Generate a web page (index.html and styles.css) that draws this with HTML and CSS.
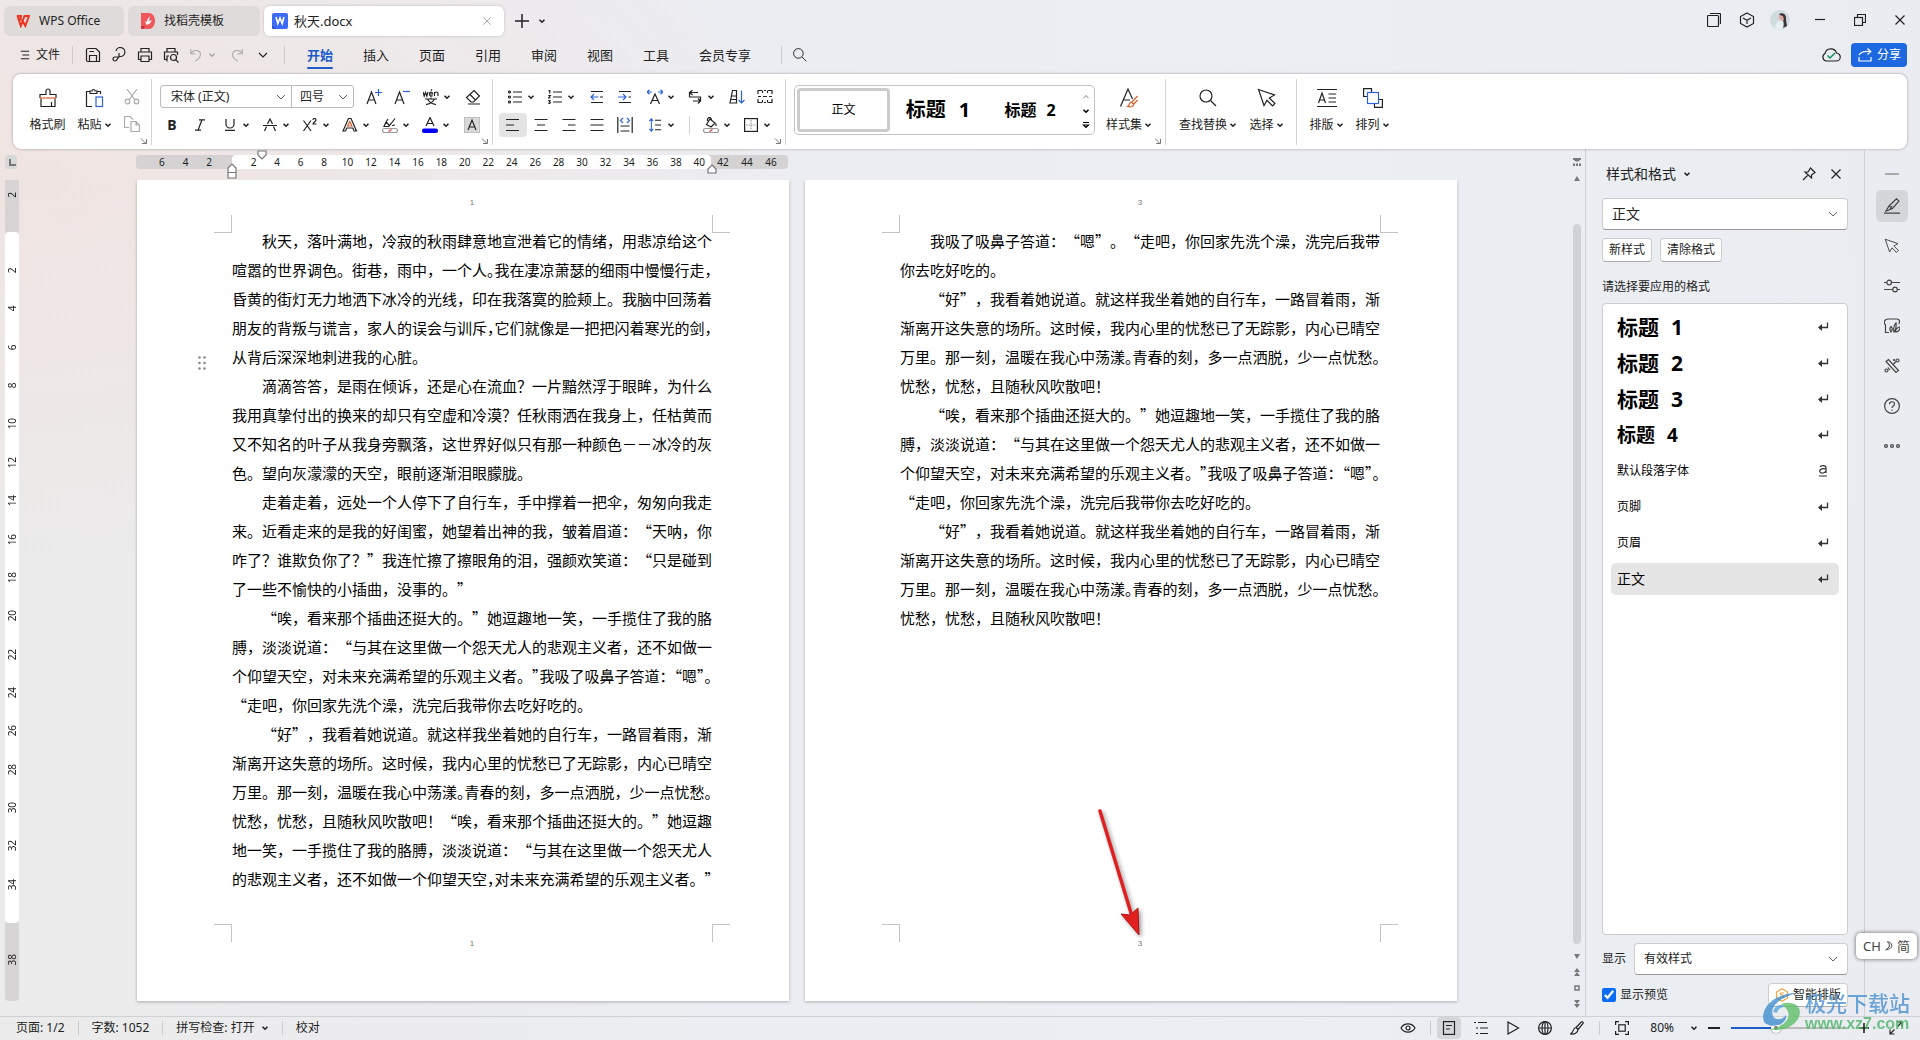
FILE: index.html
```html
<!DOCTYPE html>
<html lang="zh-CN">
<head>
<meta charset="utf-8">
<title>秋天.docx - WPS Office</title>
<link rel="stylesheet" href="styles.css">
</head>
<body>
<svg class="sprite" aria-hidden="true">
  <symbol id="caret" viewBox="0 0 8 8"><path d="M1.500 2.700 4 5.200 6.500 2.700" stroke-width="1.600"/></symbol>
  <symbol id="chev" viewBox="0 0 12 12"><path d="M2 4 6 8 10 4"/></symbol>
  <symbol id="close" viewBox="0 0 12 12"><path d="M1.500 1.500 10.500 10.500M10.500 1.500 1.500 10.500"/></symbol>
  <symbol id="launch" viewBox="0 0 8 8"><path d="M1 1.500 6 6.500M6.500 2V6.500H2"/></symbol>
  <symbol id="ret" viewBox="0 0 12 12"><path d="M10.500 1.500V6.500H3" stroke-width="1.300"/><path d="M5 3V10L1 6.500Z" fill="currentColor" stroke="none"/></symbol>
  <symbol id="mag" viewBox="0 0 20 20"><circle cx="8" cy="8" r="6"/><path d="M12.500 12.500 18 18"/></symbol>
  <symbol id="cursor" viewBox="0 0 20 20"><path d="M1.500 1.500 17.500 7 12.300 10 18 15.500 15.500 18 10 12.300 7 17.500Z"/></symbol>
</svg>
<div class="app">
  <header class="titlebar">
    <nav class="tabs">
      <button class="tab home"><svg class="i14" viewBox="0 0 14 12"><path d="M.8 1H5L4.500 4.500 3 3.300M1.500 1 4.800 11 8.500 1H13L9.300 11 6 4.500" stroke="#f0321e" stroke-width="1.900"/></svg>WPS Office</button>
      <button class="tab tpl"><svg class="i16" viewBox="0 0 16 16"><path d="M1 0H9A6 8 0 0 1 9 16H1Z" fill="#f0575a" stroke="none"/><path d="M1 13H5L3 16H1Z" fill="#c9333a" stroke="none"/><path d="M7 12C4.500 9 5 7 7 9 7 6 9 4 10 3.500 9 6 9.500 7 8.500 9 10 7 11 7 11.500 7.500 11 9 10 11 7 12Z" fill="#fff" stroke="none"/></svg>找稻壳模板</button>
      <button class="tab doc"><svg class="i16" viewBox="0 0 16 16"><rect width="16" height="16" rx="2" fill="#3d6bf5" stroke="none"/><path d="M0 13 4 16H2A2 2 0 0 1 0 14Z" fill="#1c3fb5" stroke="none"/><path d="M4 4 5.800 10.500 8 5 10.200 10.500 12 4" stroke="#fff" stroke-width="1.600"/></svg><span class="grow">秋天.docx</span><svg class="i10 dim"><use href="#close"/></svg></button>
      <button class="plain" aria-label="新建"><svg class="i14" viewBox="0 0 14 14"><path d="M7 0V14M0 7H14" stroke-width="1.500"/></svg></button>
      <button class="plain" aria-label="标签列表"><svg class="i8"><use href="#caret"/></svg></button>
    </nav>
    <div class="winctl">
      <button class="plain" aria-label="窗口"><svg class="i14" viewBox="0 0 14 14"><rect x=".5" y="2.500" width="11" height="11" rx="1"/><path d="M3 .5H12.500A1 1 0 0 1 13.500 1.500V11"/></svg></button>
      <button class="plain" aria-label="应用"><svg class="i16" viewBox="0 0 16 16"><path d="M8 1 14.500 4.500V11.500L8 15 1.500 11.500V4.500ZM4 6 8 8.200 12 6M8 8.200V12"/></svg></button>
      <button class="plain" aria-label="账户"><svg class="i20" viewBox="0 0 20 20"><circle cx="10" cy="10" r="10" fill="#cfdcdf" stroke="none"/><path d="M5 19C5 12 9 10 12 11L14 17 11 20Z" fill="#e7eff1" stroke="none"/><path d="M9 4C13 2 17 5 16 10L17 16 13 18C15 13 13 8 9 4Z" fill="#3c3138" stroke="none"/><path d="M9 5 13 6 14 10 11 11 9 8Z" fill="#dba9a0" stroke="none"/></svg></button>
      <button class="plain" aria-label="最小化"><svg class="i10" viewBox="0 0 10 10"><path d="M0 4.500H10"/></svg></button>
      <button class="plain" aria-label="还原"><svg class="i12" viewBox="0 0 12 12"><rect x=".5" y="3.500" width="8" height="8"/><path d="M3.500 3V.5H11.500V8.500H9"/></svg></button>
      <button class="plain" aria-label="关闭"><svg class="i12"><use href="#close"/></svg></button>
    </div>
  </header>

  <div class="menubar">
    <button class="filebtn"><svg class="i10" viewBox="0 0 10 12"><path d="M0 1.500H10M2 6H10M0 10.500H10"/></svg>文件</button>
    <span class="vsep"></span>
    <div class="quick">
      <button aria-label="保存"><svg class="i16" viewBox="0 0 16 16"><path d="M1.500 3A1.500 1.500 0 0 1 3 1.500H11L14.500 5V14.500H3A1.500 1.500 0 0 1 1.500 13ZM4.500 14.500V8.500H11.500V14.500M4.500 4.500H9"/></svg></button>
      <button aria-label="输出PDF"><svg class="i16" viewBox="0 0 16 16"><path d="M5 4A4.500 4.500 0 1 1 9 9.500C6 9.500 7 14 4 14A2 2 0 1 1 4 10H8V6"/></svg></button>
      <button aria-label="打印"><svg class="i16" viewBox="0 0 16 16"><path d="M4 5V1.500H12V5M4 12.500H1.500V5H14.500V12.500H12M4 9H12V14.500H4Z"/></svg></button>
      <button aria-label="打印预览"><svg class="i16" viewBox="0 0 16 16"><path d="M4 5V1.500H12V5M4 12.500H1.500V5H14.500V8M4 14.500V9H6"/><circle cx="10.500" cy="10.500" r="3"/><path d="M12.800 12.800 15.500 15.500"/></svg></button>
      <button class="dd dim" aria-label="撤销"><svg class="i14" viewBox="0 0 16 16"><path d="M2 1V6.500H7.500M2 6.500C5 1 13.500 2 13 8 12.800 11 10 13.500 7 15"/></svg><svg class="i8"><use href="#caret"/></svg></button>
      <button class="dim" aria-label="恢复"><svg class="i14" viewBox="0 0 16 16"><path d="M14 1V6.500H8.500M14 6.500C11 1 2.500 2 3 8 3.200 11 6 13.500 9 15"/></svg></button>
      <button aria-label="更多"><svg class="i12"><use href="#chev"/></svg></button>
    </div>
    <span class="vsep"></span>
    <nav class="menus">
      <button class="on">开始</button><button>插入</button><button>页面</button><button>引用</button><button>审阅</button><button>视图</button><button>工具</button><button>会员专享</button>
    </nav>
    <span class="vsep"></span>
    <button class="searchbtn" aria-label="搜索"><svg class="i16"><use href="#mag"/></svg></button>
    <div class="menuright">
      <svg class="i20" viewBox="0 0 20 20"><path d="M5.500 16A4 4 0 0 1 4 8.500 6 6 0 0 1 15.500 8 4 4 0 0 1 15 16Z"/><path d="M6.500 10.500 9 13 14 8" stroke="#12915f" stroke-width="1.500"/></svg>
      <button class="share"><svg class="i14" viewBox="0 0 14 14"><path d="M1 9V13H13V9M1 7C3 3.500 7 3 12.500 3.500M9.500.5 12.800 3.500 9.500 6.500"/></svg>分享</button>
    </div>
  </div>

  <section class="ribbon">
    <div class="group clip">
      <button class="big"><svg class="i20" viewBox="0 0 20 20"><path d="M2 10V6.500H8V3A2 2 0 0 1 12 3V6.500H18V10M3 10.500V18.500H17V10.500M13.500 14V18"/><path d="M2 10H18" stroke="#d5622b"/></svg><span>格式刷</span></button>
      <button class="big"><svg class="i20" viewBox="0 0 20 20"><path d="M7 18.500H1.500V3.500H5M12 3.500H15.500V6M5 5.500V3H7A1.500 1.500 0 0 1 10 3H12V5.500Z"/><rect x="11" y="9" width="6.500" height="9.500" stroke="#2b62d9"/></svg><span>粘贴<svg class="i8"><use href="#caret"/></svg></span></button>
      <div class="mini">
        <button class="ib dim" aria-label="剪切"><svg class="i16" viewBox="0 0 16 16"><path d="M3 0 11 11M13 0 5 11"/><circle cx="3.500" cy="12.500" r="2.300"/><circle cx="12.500" cy="12.500" r="2.300"/></svg></button>
        <button class="ib dim" aria-label="复制"><svg class="i16" viewBox="0 0 16 16"><path d="M5 11.500H.5V.5H6L9 3.500M7 5.500H12L15.500 9V15.500H7ZM12 5.500V9H15.500"/></svg></button>
      </div>
      <svg class="launch"><use href="#launch"/></svg>
    </div>
    <div class="group font">
      <div class="row">
        <div class="fontbox">
          <label class="sel fam"><select aria-label="字体"><option>宋体 (正文)</option></select><svg class="i12"><use href="#chev"/></svg></label>
          <label class="sel size"><select aria-label="字号"><option>四号</option></select><svg class="i12"><use href="#chev"/></svg></label>
        </div>
        <button class="ib" aria-label="增大字号"><svg class="i16" viewBox="0 0 16 16"><path d="M1 15 5.500 3 10 15M2.500 11H8.500"/><path d="M12.500 0V7M9 3.500H16" stroke="#2b62d9"/></svg></button>
        <button class="ib" aria-label="减小字号"><svg class="i16" viewBox="0 0 16 16"><path d="M1 15 5.500 3 10 15M2.500 11H8.500"/><path d="M9 2.500H16" stroke="#2b62d9"/></svg></button>
        <span class="sp3"></span>
        <button class="dd" aria-label="拼音指南"><svg class="i16" viewBox="0 0 16 16"><path d="M0 3 1.200 7 2.500 3.500 3.800 7 5 3M6.500 5H9.500C9.500 2.500 6.500 2.500 6.500 5S8.500 7.500 9.500 6.500M8 1.500 9 .3M11.500 7V3M11.500 4.500C12 2.500 15 2.500 15 4.500V7M2 10H14M8 8.500V10M4.500 10C6 13 9 15 13 15.500M11.500 10C10 13 7 15 3 15.500"/></svg><svg class="i8"><use href="#caret"/></svg></button>
        <button class="ib" aria-label="清除格式"><svg class="i16" viewBox="0 0 16 16"><path d="M9 1.500 14.500 7 8.500 13H6L1.500 8.500ZM5 5.500 10.500 11M3 15H15"/></svg></button>
      </div>
      <div class="row second">
        <button class="ib b">B</button>
        <button class="ib" aria-label="倾斜"><svg class="i12" viewBox="0 0 12 12"><path d="M5 .8H11M1 11.200H7M8 .8 4 11.200"/></svg></button>
        <span class="sp4"></span>
        <button class="dd" aria-label="下划线"><svg class="i12" viewBox="0 0 12 12"><path d="M2 0V5A4 4 0 0 0 10 5V0M1 11.400H11"/></svg><svg class="i8"><use href="#caret"/></svg></button>
        <button class="dd" aria-label="删除线"><svg class="i14" viewBox="0 0 14 14"><path d="M4.500 6 7 1 9.500 6M3.500 8.500 1.500 13M10.500 8.500 12.500 13M0 7.500H14"/></svg><svg class="i8"><use href="#caret"/></svg></button>
        <button class="dd" aria-label="上标"><svg class="i14" viewBox="0 0 14 14"><path d="M.5 2.500 8 13M8 2.500.5 13M10 2C10 0 13 0 13 2 13 3.500 10 4.500 10 6H13.500"/></svg><svg class="i8"><use href="#caret"/></svg></button>
        <button class="dd" aria-label="文字效果"><svg class="i16" viewBox="0 0 16 16"><path d="M1 14 6.500 1.500H9L14.500 14H12L10.800 11H4.800L3.500 14Z"/><path d="M5.500 9 7.800 4.500 10 9Z" stroke="#d5622b"/></svg><svg class="i8"><use href="#caret"/></svg></button>
        <button class="dd" aria-label="突出显示"><svg class="i16" viewBox="0 0 16 16"><path d="M4 5 7.500 8.500 13 1.500M4 5 2 9.500H6.500L7.500 8.500M4 5 6 2M10 8.500 13 8"/><rect x=".5" y="11.500" width="15" height="4" rx="2" stroke="#999"/><path d="M6.500 14.500 9.500 12.500" stroke="#e33"/></svg><svg class="i8"><use href="#caret"/></svg></button>
        <button class="dd" aria-label="字体颜色"><svg class="i16" viewBox="0 0 16 16"><path d="M4 9 8 .5 12 9M5.500 6.500H10.500"/><rect x="0" y="11.500" width="16" height="4.500" rx="2" fill="#0000f5" stroke="none"/></svg><svg class="i8"><use href="#caret"/></svg></button>
        <button class="ib shade" aria-label="字符底纹"><svg class="i16" viewBox="0 0 16 16"><rect width="16" height="16" fill="#d9d9d9" stroke="#aaa" stroke-width="1"/><path d="M4 13 8 3 12 13M5.200 10H10.800"/></svg></button>
      </div>
      <svg class="launch"><use href="#launch"/></svg>
    </div>
    <div class="group para">
      <div class="row">
        <span class="sp4"></span>
        <button class="dd" aria-label="项目符号"><svg class="i14" viewBox="0 0 14 14"><path d="M5 2H14M5 7H14M5 12H14"/><circle cx="1.500" cy="2" r="1"/><circle cx="1.500" cy="7" r="1"/><circle cx="1.500" cy="12" r="1"/></svg><svg class="i8"><use href="#caret"/></svg></button>
        <button class="dd" aria-label="编号"><svg class="i14" viewBox="0 0 14 14"><path d="M5 2H14M5 7H14M5 12H14M.5 1 1.800.3V3.500M.3 5.500H2.300L.5 8H2.500M.3 10.500H2L1.200 12 2.300 12.500 1.500 13.700H.3"/></svg><svg class="i8"><use href="#caret"/></svg></button>
        <button class="ib" aria-label="减少缩进"><svg class="i14" viewBox="0 0 14 14"><path d="M1 1.500H13M1 12.500H13M10 7H13"/><path d="M8.500 7H1M4 4 1 7 4 10" stroke="#2b62d9"/></svg></button>
        <button class="ib" aria-label="增加缩进"><svg class="i14" viewBox="0 0 14 14"><path d="M1 1.500H13M1 12.500H13M10.500 7H13"/><path d="M0 7H8M5 4 8 7 5 10" stroke="#2b62d9"/></svg></button>
        <span class="sp4"></span>
        <button class="dd" aria-label="中文版式"><svg class="i16" viewBox="0 0 16 16"><path d="M3.500 15 8 5 12.500 15M5.300 11.500H10.700"/><path d="M0 3H5M2.500.8 0 3 2.500 5.200M16 3H11M13.500.8 16 3 13.500 5.200" stroke="#2b62d9"/></svg><svg class="i8"><use href="#caret"/></svg></button>
        <button class="dd" aria-label="换行"><svg class="i14" viewBox="0 0 14 14"><path d="M4.500 0 1.500 2.500 4.500 5M1.500 2.500H10M1.500 2.500V7H12.500V11H5M10 8.500 12.500 11 10 13.500"/></svg><svg class="i8"><use href="#caret"/></svg></button>
        <button class="ib" aria-label="排序"><svg class="i16" viewBox="0 0 16 16"><path d="M1 14 3.500 1.500H7.500V14ZM2.500 7H7.500M2 10.500H7.500"/><path d="M12.500 1.500V14M9.500 11 12.500 14 15.500 11" stroke="#2b62d9"/></svg></button>
        <button class="ib" aria-label="制表位"><svg class="i16" viewBox="0 0 16 16"><path d="M1 5V1.500H5M7 1.500H9M11 1.500H15V5M1 10V13.500H5M7 13.500H9M11 13.500H15V10M1 7.500H4M6 7.500H10M12 7.500H15M5.500 1.500V4M10.500 1.500V4M5.500 11V13.500M10.500 11V13.500"/></svg></button>
      </div>
      <div class="row">
        <button class="ib on" aria-label="左对齐"><svg class="i14" viewBox="0 0 14 14"><path d="M0 1.500H13M0 7H8M0 12.500H13"/></svg></button>
        <button class="ib" aria-label="居中"><svg class="i14" viewBox="0 0 14 14"><path d="M.5 1.500H13.500M3 7H11M.5 12.500H13.500"/></svg></button>
        <button class="ib" aria-label="右对齐"><svg class="i14" viewBox="0 0 14 14"><path d="M.5 1.500H13.500M6 7H13.500M.5 12.500H13.500"/></svg></button>
        <button class="ib" aria-label="两端对齐"><svg class="i14" viewBox="0 0 14 14"><path d="M.5 1.500H13.500M.5 7H13.500M.5 12.500H13.500"/></svg></button>
        <button class="ib" aria-label="分散对齐"><svg class="i16" viewBox="0 0 16 16"><path d="M.8 0V16M15.200 0V16M3.500 9H12.500M3.500 14H12.500"/><path d="M6 1 3.500 3.500 6 6M10 1 12.500 3.500 10 6" stroke="#2b62d9"/></svg></button>
        <span class="sp4"></span>
        <button class="dd" aria-label="行距"><svg class="i14" viewBox="0 0 14 16"><path d="M7 2.500H14M7 8H14M7 13.500H14"/><path d="M2.800 1V15M.5 3.500 2.800 1 5 3.500M.5 12.500 2.800 15 5 12.500" stroke="#2b62d9"/></svg><svg class="i8"><use href="#caret"/></svg></button>
        <span class="tinysep"></span>
        <button class="dd" aria-label="底纹颜色"><svg class="i16" viewBox="0 0 16 16"><path d="M7 2 12 6 8 10 3.500 7.500ZM4.500 4C4 0 8-1 8.500 3M13 6.500V9"/><rect x=".5" y="11.500" width="15" height="4" rx="2" stroke="#999"/><path d="M6.500 14.500 9.500 12.500" stroke="#e33"/></svg><svg class="i8"><use href="#caret"/></svg></button>
        <button class="dd" aria-label="边框"><svg class="i14" viewBox="0 0 14 14"><rect x=".6" y=".6" width="12.800" height="12.800"/><path d="M7 2V12M2 7H12" stroke-dasharray="1.500 1" stroke="#999"/></svg><svg class="i8"><use href="#caret"/></svg></button>
      </div>
      <svg class="launch"><use href="#launch"/></svg>
    </div>
    <div class="group styles">
      <div class="gallery">
        <button class="g0">正文</button>
        <button class="g1">标题<span>1</span></button>
        <button class="g2">标题<span>2</span></button>
        <div class="garrows"><svg class="i8 dim"><path d="M1.500 5.200 4 2.700 6.500 5.200"/></svg><svg class="i8"><use href="#caret"/></svg><svg class="i8" viewBox="0 0 8 8"><path d="M1 1.500H7M1.500 4 4 6.500 6.500 4Z"/></svg></div>
      </div>
      <button class="big set"><svg class="i20" viewBox="0 0 20 20"><path d="M1.500 18.500 9 1 13.500 11M4.500 12H11"/><path d="M18.500 8 12.500 14.500M18.500 12 14.500 16.500M12.500 14C10 14 11 17.500 8.500 18.500 12 19.500 15 18.500 14.500 16Z" stroke="#d5622b"/></svg><span>样式集<svg class="i8"><use href="#caret"/></svg></span></button>
      <svg class="launch"><use href="#launch"/></svg>
    </div>
    <div class="group find">
      <button class="big"><svg class="i20"><use href="#mag"/></svg><span>查找替换<svg class="i8"><use href="#caret"/></svg></span></button>
      <button class="big"><svg class="i20"><use href="#cursor"/></svg><span>选择<svg class="i8"><use href="#caret"/></svg></span></button>
    </div>
    <div class="group arrange">
      <button class="big"><svg class="i20" viewBox="0 0 20 20"><path d="M0 1.500H20M0 18.500H20M11.500 6H19M11.500 10H19M11.500 14H19M1.500 15 5 5 8.500 15M2.500 12H7.500"/></svg><span>排版<svg class="i8"><use href="#caret"/></svg></span></button>
      <button class="big"><svg class="i20" viewBox="0 0 20 20"><path d="M4 8.500H.6V.6H8.500V4M16 11.500H19.400V19.400H11.500V16"/><rect x="4.500" y="4.500" width="11" height="11" stroke="#2b62d9"/></svg><span>排列<svg class="i8"><use href="#caret"/></svg></span></button>
    </div>
  </section>

  <main class="work">
    <div class="vcol">
      <div class="corner"></div>
      <div class="vruler">
        <div class="vseg top"><span>2</span></div>
        <div class="vseg mid"><span>2</span><span>4</span><span>6</span><span>8</span><span>10</span><span>12</span><span>14</span><span>16</span><span>18</span><span>20</span><span>22</span><span>24</span><span>26</span><span>28</span><span>30</span><span>32</span><span>34</span></div>
        <div class="vseg bot"><span>38</span></div>
      </div>
    </div>
    <div class="canvas">
      <div class="sheet">
        <div class="hruler">
          <div class="hseg left"><span>6</span><span>4</span><span>2</span></div>
          <div class="hseg mid"><span>2</span><span>4</span><span>6</span><span>8</span><span>10</span><span>12</span><span>14</span><span>16</span><span>18</span><span>20</span><span>22</span><span>24</span><span>26</span><span>28</span><span>30</span><span>32</span><span>34</span><span>36</span><span>38</span><span>40</span></div>
          <div class="hseg right"><span>42</span><span>44</span><span>46</span></div>
          <svg class="mk first" viewBox="0 0 10 10"><path d="M1 1H9V5L5 9 1 5Z"/></svg>
          <svg class="mk hang" viewBox="0 0 10 16"><path d="M5 1 9 5V15H1V5ZM1 9.500H9"/></svg>
          <svg class="mk rind" viewBox="0 0 10 10"><path d="M5 1 9 5V9H1V5Z"/></svg>
        </div>
        <div class="pages">
          <article class="page">
            <div class="pno">1</div>
            <div class="marks up"><i></i><i></i></div>
            <div class="body">
              <p class="ind">秋天，落叶满地，冷寂的秋雨肆意地宣泄着它的情绪，用悲凉给这个<br>喧嚣的世界调色。街巷，雨中，一个人<span class="h">。</span>我在凄凉萧瑟的细雨中慢慢行走<span class="h">，</span><br>昏黄的街灯无力地洒下冰冷的光线，印在我落寞的脸颊上。我脑中回荡着<br>朋友的背叛与谎言，家人的误会与训斥<span class="h">，</span>它们就像是一把把闪着寒光的剑<span class="h">，</span><br>从背后深深地刺进我的心脏。</p>
              <p class="ind">滴滴答答，是雨在倾诉，还是心在流血？一片黯然浮于眼眸，为什么<br>我用真挚付出的换来的却只有空虚和冷漠？任秋雨洒在我身上，任枯黄而<br>又不知名的叶子从我身旁飘落，这世界好似只有那一种颜色－－冰冷的灰<br>色。望向灰濛濛的天空，眼前逐渐泪眼朦胧。</p>
              <p class="ind">走着走着，远处一个人停下了自行车，手中撑着一把伞，匆匆向我走<br>来。近看走来的是我的好闺蜜，她望着出神的我，皱着眉道：“天呐，你<br>咋了？谁欺负你了？”我连忙擦了擦眼角的泪，强颜欢笑道：“只是碰到<br>了一些不愉快的小插曲，没事的。”</p>
              <p class="ind">“唉，看来那个插曲还挺大的。”她逗趣地一笑，一手揽住了我的胳<br>膊，淡淡说道：“与其在这里做一个怨天尤人的悲观主义者，还不如做一<br>个仰望天空，对未来充满希望的乐观主义者。<span class="h">”</span>我吸了吸鼻子答道<span class="h">：</span>“嗯<span class="h">”</span><span class="h">。</span><br>“走吧，你回家先洗个澡，洗完后我带你去吃好吃的。</p>
              <p class="ind">“好”，我看着她说道。就这样我坐着她的自行车，一路冒着雨，渐<br>渐离开这失意的场所。这时候，我内心里的忧愁已了无踪影，内心已晴空<br>万里。那一刻，温暖在我心中荡漾<span class="h">。</span>青春的刻，多一点洒脱，少一点忧愁<span class="h">。</span><br>忧愁，忧愁，且随秋风吹散吧！“唉，看来那个插曲还挺大的。”她逗趣<br>地一笑，一手揽住了我的胳膊，淡淡说道：“与其在这里做一个怨天尤人<br>的悲观主义者，还不如做一个仰望天空<span class="h">，</span>对未来充满希望的乐观主义者。<span class="h">”</span></p>
            </div>
            <div class="marks down"><i></i><i></i></div>
            <div class="pno foot">1</div>
            <svg class="grip" viewBox="0 0 8 14"><circle cx="1.500" cy="1.500" r="1.300"/><circle cx="6.500" cy="1.500" r="1.300"/><circle cx="1.500" cy="7" r="1.300"/><circle cx="6.500" cy="7" r="1.300"/><circle cx="1.500" cy="12.500" r="1.300"/><circle cx="6.500" cy="12.500" r="1.300"/></svg>
          </article>
          <article class="page">
            <div class="pno">3</div>
            <div class="marks up"><i></i><i></i></div>
            <div class="body">
              <p class="ind">我吸了吸鼻子答道：“嗯”。“走吧，你回家先洗个澡，洗完后我带<br>你去吃好吃的。</p>
              <p class="ind">“好”，我看着她说道。就这样我坐着她的自行车，一路冒着雨，渐<br>渐离开这失意的场所。这时候，我内心里的忧愁已了无踪影，内心已晴空<br>万里。那一刻，温暖在我心中荡漾<span class="h">。</span>青春的刻，多一点洒脱，少一点忧愁<span class="h">。</span><br>忧愁，忧愁，且随秋风吹散吧！</p>
              <p class="ind">“唉，看来那个插曲还挺大的。”她逗趣地一笑，一手揽住了我的胳<br>膊，淡淡说道：“与其在这里做一个怨天尤人的悲观主义者，还不如做一<br>个仰望天空，对未来充满希望的乐观主义者。<span class="h">”</span>我吸了吸鼻子答道<span class="h">：</span>“嗯<span class="h">”</span><span class="h">。</span><br>“走吧，你回家先洗个澡，洗完后我带你去吃好吃的。</p>
              <p class="ind">“好”，我看着她说道。就这样我坐着她的自行车，一路冒着雨，渐<br>渐离开这失意的场所。这时候，我内心里的忧愁已了无踪影，内心已晴空<br>万里。那一刻，温暖在我心中荡漾<span class="h">。</span>青春的刻，多一点洒脱，少一点忧愁<span class="h">。</span><br>忧愁，忧愁，且随秋风吹散吧！</p>
            </div>
            <div class="marks down"><i></i><i></i></div>
            <div class="pno foot">3</div>
            <svg class="arrow" viewBox="0 0 60 136"><path d="M8 5 39 107" stroke="#e02020" stroke-width="3.500" stroke-linecap="round"/><path d="M47 129 29 108 38 109 46 102Z" fill="#e02020" stroke="#b01515" stroke-width="1"/></svg>
          </article>
        </div>
      </div>
    </div>
    <div class="scroll">
      <svg class="i8" viewBox="0 0 8 8"><path class="f" d="M0 0H8V1.500L5 3.500H3L0 1.500ZM0 8V5.500H2V8ZM3 8V5.500H5V8ZM6 8V5.500H8V8Z"/></svg>
      <svg class="i8" viewBox="0 0 8 8"><path class="f" d="M1 7 4 2 7 7Z"/></svg>
      <div class="thumb"></div>
      <svg class="i8" viewBox="0 0 8 8"><path class="f" d="M1 2 4 7 7 2Z"/></svg>
      <svg class="i8" viewBox="0 0 8 8"><path class="f" d="M1 4 4 0 7 4ZM1 8 4 4 7 8Z"/></svg>
      <svg class="i8" viewBox="0 0 8 8"><rect x="2" y="2" width="4" height="4" stroke-width="1.500"/></svg>
      <svg class="i8" viewBox="0 0 8 8"><path class="f" d="M1 0 4 4 7 0ZM1 4 4 8 7 4Z"/></svg>
    </div>
    <aside class="panel">
      <div class="phead"><span>样式和格式</span><svg class="i8"><use href="#caret"/></svg><span class="grow"></span>
        <button class="plain" aria-label="固定"><svg class="i14" viewBox="0 0 14 14"><path d="M8.500 1 13 5.500 9.500 8V11L3 5H6ZM5.500 8.500 1 13"/></svg></button>
        <button class="plain" aria-label="关闭"><svg class="i12"><use href="#close"/></svg></button></div>
      <label class="sel cur"><select aria-label="当前样式"><option>正文</option></select><svg class="i12"><use href="#chev"/></svg></label>
      <div class="pbtns"><button class="btn">新样式</button><button class="btn">清除格式</button></div>
      <div class="plabel">请选择要应用的格式</div>
      <ul class="list">
        <li class="h1">标题<span>1</span><svg class="i12"><use href="#ret"/></svg></li>
        <li class="h1">标题<span>2</span><svg class="i12"><use href="#ret"/></svg></li>
        <li class="h1">标题<span>3</span><svg class="i12"><use href="#ret"/></svg></li>
        <li class="h4">标题<span>4</span><svg class="i12"><use href="#ret"/></svg></li>
        <li>默认段落字体<svg class="i12" viewBox="0 0 12 12"><path d="M3 2C4 0 9 0 9 3V8M9 4C4 3 2 5 3 7S8 8 9 6M2 11H10"/></svg></li>
        <li>页脚<svg class="i12"><use href="#ret"/></svg></li>
        <li>页眉<svg class="i12"><use href="#ret"/></svg></li>
        <li class="on">正文<svg class="i12"><use href="#ret"/></svg></li>
      </ul>
      <div class="prow"><label for="show">显示</label><div class="sel showsel"><select id="show"><option>有效样式</option></select><svg class="i12"><use href="#chev"/></svg></div></div>
      <div class="prow last"><label class="check"><input type="checkbox" checked>显示预览</label><button class="btn smart"><svg class="i14" viewBox="0 0 14 14"><path d="M7 .8 12.500 4V10L7 13.200 1.500 10V4ZM9 5H6.500C4.500 5 5 7 7 7S9.500 9.500 7.500 9.500H5" stroke="#eda53c"/></svg>智能排版</button></div>
    </aside>
    <nav class="rail">
      <button class="fold" aria-label="收起"><svg class="i14" viewBox="0 0 14 14"><path d="M0 7H14" stroke="#999" stroke-width="1.600"/></svg></button>
      <button class="on" aria-label="样式"><svg class="i16" viewBox="0 0 16 16"><path d="M0 15.200H16M2 13 5 8 12.500.8 15 3 8.500 10.500 2 13ZM5 8 8.500 10.500M6 11.500 8 8"/></svg></button>
      <button aria-label="选择"><svg class="i16"><use href="#cursor"/></svg></button>
      <button aria-label="属性"><svg class="i16" viewBox="0 0 16 16"><path d="M0 4.500H3M8 4.500H16M0 11.500H8M13.500 11.500H16"/><circle cx="5.200" cy="4.500" r="2.300"/><circle cx="11" cy="11.500" r="2.300"/></svg></button>
      <button aria-label="素材"><svg class="i16" viewBox="0 0 16 16"><path d="M5 14.500H1.500V7C-1 4 1 1 4 1H13C16 1 16 5 14.500 6M7 14C5 11 6 9 7 8.500 8.500 10 8.500 12 7 14ZM10 14C9 10 10 7 12 5 12.500 9 12 12 10 14ZM11 14C12 11 14 9 16 9 16 12 14 14 11 14"/></svg></button>
      <button aria-label="工具"><svg class="i16" viewBox="0 0 16 16"><path d="M4.500 1.500 2 3.500 12 14.500 14.500 12.500ZM9.500 6 12 3.500M4 9.500 6 12"/><circle cx="13.500" cy="2.500" r="1.500"/><circle cx="2.500" cy="12.500" r="1.500"/><circle cx="10" cy="2" r=".5"/></svg></button>
      <button aria-label="帮助"><svg class="i16" viewBox="0 0 16 16"><circle cx="8" cy="8" r="7.400"/><path d="M5.500 6.200C5.500 3 10.500 3 10.500 6 10.500 8 8 8 8 10M8 11.500V12.800"/></svg></button>
      <button aria-label="更多"><svg class="i16" viewBox="0 0 16 16"><circle cx="2" cy="8" r="1.400"/><circle cx="8" cy="8" r="1.400"/><circle cx="14" cy="8" r="1.400"/></svg></button>
      <div class="ime">CH<svg class="i10" viewBox="0 0 10 12"><path d="M3 1C10 1 11 10 1 10.500 6 8 7 4 3 1Z"/></svg>简</div>
    </nav>
  </main>

  <footer class="status">
    <span>页面: 1/2</span><i class="vs"></i><span>字数: 1052</span><i class="vs"></i><span>拼写检查: 打开<svg class="i8"><use href="#caret"/></svg></span><i class="vs"></i><span>校对</span>
    <div class="views">
      <button aria-label="护眼"><svg class="i16" viewBox="0 0 16 16"><path d="M1 8C4 2.500 12 2.500 15 8 12 13.500 4 13.500 1 8Z"/><circle cx="8" cy="8" r="2"/></svg></button>
      <i class="vs"></i>
      <button class="on" aria-label="页面视图"><svg class="i14" viewBox="0 0 14 14"><rect x="1.500" y=".6" width="11" height="12.800"/><path d="M4 4.500H10M4 8H8"/></svg></button>
      <button aria-label="大纲"><svg class="i14" viewBox="0 0 14 14"><path d="M0 1.500H2M4 1.500H13M2 7H4M6 7H14M2 12.500H4M6 12.500H14"/></svg></button>
      <button aria-label="阅读"><svg class="i14" viewBox="0 0 14 14"><path d="M2 1 12.500 7 2 13Z"/></svg></button>
      <button aria-label="Web"><svg class="i14" viewBox="0 0 14 14"><circle cx="7" cy="7" r="6.400"/><ellipse cx="7" cy="7" rx="3" ry="6.400"/><path d="M.6 7H13.400M7 .6V13.400"/></svg></button>
      <button aria-label="写作"><svg class="i14" viewBox="0 0 14 14"><path d="M6 6.500 11.500.8C13 .5 13.500 1.500 13 2.500L8 8.500ZM6 6.500C3 6.500 4 11 .5 13 4 13.500 8 12 8 8.500"/></svg></button>
      <i class="vs"></i>
      <button aria-label="适应"><svg class="i14" viewBox="0 0 14 14"><path d="M.6 4V.6H4M10 .6H13.400V4M13.400 10V13.400H10M4 13.400H.6V10"/><rect x="3.800" y="3.800" width="6.400" height="6.400"/></svg></button>
      <span class="zoomv">80%</span><svg class="i8"><use href="#caret"/></svg>
      <button aria-label="缩小"><svg class="i12" viewBox="0 0 12 12"><path d="M0 6H12" stroke-width="2"/></svg></button>
      <input type="range" aria-label="缩放" min="0" max="100" value="38">
      <button aria-label="放大"><svg class="i12" viewBox="0 0 12 12"><path d="M1 6H11M6 1V11" stroke-width="1.600"/></svg></button>
      <button aria-label="全屏"><svg class="i14" viewBox="0 0 14 14"><path d="M8.500 1H13V5.500M13 1 8.500 5.500M5.500 13H1V8.500M1 13 5.500 8.500"/></svg></button>
    </div>
  </footer>
  <div class="wm">
    <svg viewBox="0 0 42 42"><path d="M3 32C-2 18 14 3 36 3 18 8 8 17 12 26 14 31 22 30 25 25 27 34 10 40 3 32Z" fill="#3f8fd0" stroke="none"/><path d="M12 22C14 14 22 13 27 17 22 16 17 18 16 23Z" fill="#5ba7dc" stroke="none"/><path d="M20 14C32 10 42 16 38 27 34 37 20 42 8 39 24 38 36 24 20 14Z" fill="#5fbf6a" stroke="none"/></svg>
    <div><b>极光下载站</b><span>www.xz7.com</span></div>
  </div>
</div>
</body>
</html>
```
FILE: styles.css
```css
* { box-sizing: border-box; }
body {
  margin: 0;
  font: 12px/16px "Noto Sans", "Noto Sans CJK SC", sans-serif;
  color: #222;
}
button, select, input { font: inherit; color: inherit; }
button { border: 0; background: none; padding: 0; margin: 0; }
svg { fill: none; stroke: currentColor; stroke-width: 1.2; flex: none; display: block; }
.f { fill: #777; stroke: none; }
.sprite { position: absolute; width: 0; height: 0; }
.i8 { width: 8px; height: 8px; }
.i10 { width: 10px; height: 10px; }
.i12 { width: 12px; height: 12px; }
.i14 { width: 14px; height: 14px; }
.i16 { width: 16px; height: 16px; }
.i20 { width: 20px; height: 20px; }
.dim { color: #aaa; }
.grow { flex: 1; text-align: left; }
.plain { display: flex; align-items: center; justify-content: center; }

.app {
  position: relative;
  min-height: 100vh;
  display: flex;
  flex-direction: column;
  background:
    radial-gradient(ellipse 760px 400px at 30px 180px, #f0e4e2, #f0e4e200),
    linear-gradient(90deg, #ebebeb, #ecedf2 40%, #eaeef2 80%, #ebecf1);
}

/* title bar */
.titlebar { display: flex; justify-content: space-between; height: 39px; padding: 6px 10px 0 4px; }
.tabs { display: flex; gap: 4px; height: 30px; align-items: stretch; }
.tab { display: flex; align-items: center; gap: 8px; padding: 0 12px; border-radius: 6px; background: #dfdbda; }
.home { width: 120px; gap: 9px; }
.tpl { width: 132px; }
.tab.doc { width: 240px; padding: 0 12px 0 8px; gap: 6px; background: #fff; box-shadow: 0 0 3px #0003; font-size: 13px; }
.tabs .plain { width: 16px; margin-left: 6px; }
.tabs .plain + .plain { margin-left: 0; }
.winctl { display: flex; gap: 20px; height: 28px; }
.winctl .plain { width: 20px; }
.winctl .plain:nth-child(1), .winctl .plain:nth-child(2) { margin-right: -7px; }

/* menu bar */
.menubar { display: flex; align-items: center; height: 32px; padding: 0 13px 0 20px; }
.filebtn { display: flex; align-items: center; gap: 6px; width: 52px; }
.vsep { width: 1px; height: 18px; background: #ccc; }
.quick { display: flex; align-items: center; width: 211px; padding-left: 7px; }
.quick button { width: 26px; display: flex; justify-content: center; }
.quick .dd { width: 40px; }
.menus { display: flex; padding: 0 15px 0 7px; }
.menus button { position: relative; padding: 0 15px; font-size: 13px; line-height: 30px; height: 30px; }
.menus .on { color: #1b5cc8; font-weight: 700; }
.menus .on::after { content: ""; position: absolute; left: 15px; right: 15px; bottom: 1px; height: 2px; background: #1b5cc8; border-radius: 1px; }
.searchbtn { padding-left: 10px; }
.menuright { margin-left: auto; display: flex; align-items: center; gap: 10px; }
.share { display: flex; align-items: center; gap: 5px; width: 56px; height: 24px; padding-left: 7px; border-radius: 4px; background: #1d68e0; color: #fff; }

/* ribbon */
.ribbon {
  display: flex;
  align-items: center;
  height: 75px;
  margin: 3px 13px 0;
  background: #fff;
  border-radius: 8px;
  box-shadow: 0 0 3px #0005;
  position: relative;
}
.group { position: relative; height: 66px; padding: 4px 0 0 6px; border-right: 1px solid #d5d5d5; }
.group:last-child { border: 0; }
.clip { display: flex; width: 139px; padding-left: 11px; }
.font { width: 341px; }
.para { width: 293px; }
.styles { width: 380px; display: flex; padding-left: 8px; }
.find { width: 131px; display: flex; gap: 11px; padding-left: 13px; }
.arrange { display: flex; gap: 9px; padding-left: 11px; }
.launch { position: absolute; right: 3px; bottom: 0; width: 8px; height: 8px; color: #777; stroke-width: 1; }
.big { display: flex; flex-direction: column; align-items: center; gap: 9px; padding-top: 5px; height: 57px; min-width: 37px; white-space: nowrap; }
.big span { display: flex; align-items: center; gap: 2px; }
.clip .big { width: 47px; }
.mini { display: flex; flex-direction: column; gap: 3px; padding-top: 2px; }
.row { display: flex; align-items: center; height: 28px; }
.ib { width: 28px; height: 24px; display: flex; align-items: center; justify-content: center; }
.ib.on { background: #e4e4e4; border-radius: 4px; }
.ib.b { font-weight: 700; font-size: 14px; }
.dd { width: 40px; height: 24px; display: flex; align-items: center; justify-content: flex-start; }
.dd > svg:first-child { margin: 0 auto; }
.dd > svg:last-child { margin-right: 8px; }
.sp3 { width: 3px; }
.sp4 { width: 4px; }
.tinysep { width: 1px; height: 18px; background: #d5d5d5; margin: 0 9px 0 6px; }
.fontbox { display: flex; width: 194px; height: 23px; margin: 0 6px 0 2px; border: 1px solid #bbb; border-radius: 3px; }
.sel { display: flex; align-items: center; padding-right: 4px; position: relative; }
.sel select { flex: 1; appearance: none; border: 0; background: none; outline: 0; height: 100%; padding: 0; min-width: 0; }
.sel svg { color: #666; pointer-events: none; stroke-width: 1; }
.fam { width: 131px; padding-left: 10px; border-right: 1px solid #bbb; }
.size { flex: 1; padding-left: 8px; }
.gallery { display: flex; align-items: stretch; width: 301px; height: 50px; margin-top: 2px; padding: 2px; border: 1px solid #c2c2c2; border-radius: 5px; color: #000; }
.gallery button { display: flex; align-items: center; justify-content: center; width: 93px; }
.gallery .g0 { border: 3px solid #ccc; border-radius: 4px; }
.gallery .g1 { font-size: 20px; font-weight: 700; gap: 13px; width: 96px; }
.gallery .g2 { font-size: 16px; font-weight: 700; gap: 10px; width: 88px; }
.garrows { display: flex; flex-direction: column; justify-content: space-around; margin-left: auto; padding: 2px 2px 0 0; }
.set { margin-left: 11px; }

/* document area */
.work { flex: 1; display: flex; }
.vcol { width: 21px; padding: 6px 0 15px 5px; display: flex; flex-direction: column; }
.corner { width: 12px; height: 14px; border-radius: 3px; background: #d8d8d8; position: relative; }
.corner::after { content: ""; position: absolute; left: 4px; top: 4px; width: 5px; height: 5px; border: solid #777; border-width: 0 0 2px 2px; }
.vruler { flex: 1; margin-top: 11px; width: 14px; background: #d6d4d4; border-radius: 0 0 4px 4px; font-size: 10px; display: flex; flex-direction: column; }
.vseg { display: flex; flex-direction: column; align-items: center; }
.vseg span { writing-mode: vertical-rl; transform: rotate(180deg); line-height: 14px; }
.vseg.top { height: 52px; padding-top: 12px; }
.vseg.mid { height: 691px; padding: 19px 0 20px; background: #fff; border-radius: 4px; }
.vseg.mid span { flex: 1; text-align: center; }
.vseg.bot { padding-top: 31px; }
.canvas { flex: 1; display: flex; justify-content: center; }
.sheet { padding-top: 6px; }
.hruler { position: relative; display: flex; width: 652px; height: 14px; margin-left: -1px; border-radius: 4px; background: #d4d2d3; font-size: 10px; line-height: 14px; }
.hseg { display: flex; }
.hseg span { flex: 1; text-align: center; }
.hseg.left { width: 96px; padding: 0 11px 0 14px; }
.hseg.mid { width: 479px; padding-left: 10px; background: #fff; border-radius: 4px; }
.hseg.right { flex: 1; padding-right: 5px; }
.mk { position: absolute; width: 10px; height: 10px; color: #777; fill: #fff; z-index: 1; }
.mk.first { left: 121px; top: -5px; }
.mk.hang { left: 91px; top: 8px; height: 16px; }
.mk.rind { left: 571px; top: 9px; }
.pages { display: flex; gap: 16px; margin-top: 11px; }
.page {
  position: relative;
  width: 652px;
  min-height: 821px;
  padding: 17px 77px 51px 95px;
  display: flex;
  flex-direction: column;
  background: #fff;
  box-shadow: 0 1px 3px #0004;
  clip-path: inset(0 -6px -6px -6px);
}
.pno { font: 8px/12px "Liberation Sans", sans-serif; color: #777; text-align: center; }
.marks { display: flex; justify-content: space-between; margin: 6px -18px -7px; }
.marks i { width: 18px; height: 18px; border: solid #c4c4c4; border-width: 0 1px 1px 0; }
.marks i:last-child { border-width: 0 0 1px 1px; }
.marks.down { margin: auto -18px -4px; }
.down i { border-width: 1px 1px 0 0; }
.down i:last-child { border-width: 1px 0 0 1px; }
.body {
  font: 400 15px/29px "Noto Sans CJK SC", sans-serif;
  color: #000;
  white-space: nowrap;
  text-spacing-trim: space-all;
}
.body p { margin: 0; }
.ind { text-indent: 2em; }
.h { font-feature-settings: "halt"; }
.grip { position: absolute; left: 61px; top: 176px; width: 8px; height: 14px; fill: #888; stroke: none; }
.arrow { position: absolute; left: 287px; top: 626px; width: 60px; height: 136px; filter: drop-shadow(2px 2px 2px #0006); }

.scroll { width: 12px; padding: 9px 0 8px; display: flex; flex-direction: column; gap: 8px; color: #777; }
.thumb { flex: 1; width: 8px; margin: 34px 0 0; border-radius: 4px; background: #d0d1d5; }

/* style panel */
.panel { width: 279px; border-left: 1px solid #cfd1d4; padding: 11px 16px 9px; display: flex; flex-direction: column; }
.phead { display: flex; align-items: center; gap: 7px; height: 28px; padding: 0 6px 0 4px; font-size: 14px; }
.phead .plain { margin-left: 7px; }
.panel .sel { background: #fff; border: 1px solid #ccc; border-bottom-color: #999; border-radius: 4px; height: 32px; padding: 0 8px 0 9px; }
.panel .cur { margin-top: 10px; font-size: 14px; }
.pbtns { display: flex; gap: 8px; margin-top: 8px; }
.btn { height: 24px; padding: 0 6px; background: #fff; border: 1px solid #ccc; border-bottom-color: #aaa; border-radius: 4px; white-space: nowrap; }
.plabel { margin: 17px 0 8px; }
.list { flex: 1; margin: 0 0 8px; padding: 5px 8px; list-style: none; background: #fff; border: 1px solid #ccc; border-radius: 4px; color: #000; }
.list li { display: flex; align-items: center; height: 32px; margin: 2px 0 4px; padding: 0 10px 0 6px; border-radius: 5px; }
.list svg { margin-left: auto; color: #333; }
.list span { margin-left: 12px; }
.h1, .h4 { font-weight: 700; font-size: 21px; }
.h4 { font-size: 19px; }
.list .on { background: #e5e5e5; font-size: 14px; }
.prow { display: flex; align-items: center; gap: 8px; }
.showsel { flex: 1; }
.last { justify-content: space-between; margin-top: 8px; }
.check { display: flex; align-items: center; gap: 4px; }
.check input { width: 14px; height: 14px; margin: 0; accent-color: #0b6cf5; }
.smart { display: flex; align-items: center; gap: 4px; }

.rail { width: 56px; border-left: 1px solid #cfd1d4; padding: 9px 1px 0 0; display: flex; flex-direction: column; align-items: center; gap: 8px; position: relative; color: #444; }
.rail button { width: 32px; height: 32px; border-radius: 5px; display: flex; align-items: center; justify-content: center; }
.rail .fold { margin-bottom: -8px; }
.rail .on { background: #d4d7d9; }
.ime { position: absolute; right: 3px; bottom: 57px; width: 61px; height: 26px; display: flex; align-items: center; justify-content: center; gap: 3px; background: #fff; border-radius: 5px; box-shadow: 0 0 4px #0009; font-size: 13px; }

/* status bar */
.status { height: 24px; display: flex; align-items: center; border-top: 1px solid #cfd1d4; padding: 0 8px 2px 16px; }
.status span { display: flex; align-items: center; gap: 6px; }
.vs { width: 1px; height: 14px; background: #ccc; margin: 0 13px; }
.views { margin-left: auto; display: flex; align-items: center; }
.views button { width: 32px; height: 22px; display: flex; align-items: center; justify-content: center; }
.views .vs { margin: 0 6px; }
.views .on { width: 24px; margin-right: 4px; background: #d4d7d9; border-radius: 4px; }
.zoomv { margin: 0 16px 0 12px; }
.views input {
  appearance: none;
  width: 116px;
  height: 2px;
  margin: 0 1px;
  background: linear-gradient(90deg, #1b5cc8 38%, #bbb 38%);
}
.views input::-webkit-slider-thumb { appearance: none; width: 10px; height: 10px; border-radius: 50%; background: #777; border: 3px solid #fff; box-shadow: 0 0 2px #0008; }

.wm { position: absolute; right: 10px; bottom: 6px; display: flex; gap: 2px; opacity: .8; pointer-events: none; }
.wm svg { width: 42px; height: 42px; }
.wm b { display: block; font: 500 21px/24px "Noto Sans CJK SC", sans-serif; color: #4a90cf; }
.wm span { display: block; font: 700 16px/20px "Liberation Sans", sans-serif; color: #4fb56a; }
```
